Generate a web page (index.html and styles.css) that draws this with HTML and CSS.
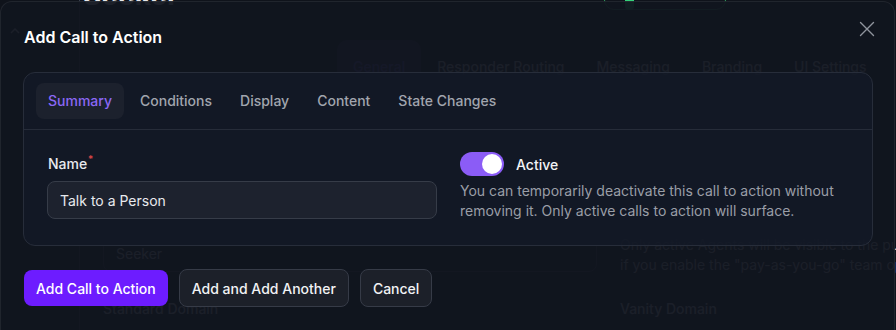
FILE: index.html
```html
<!DOCTYPE html>
<html lang="en">
<head>
<meta charset="utf-8">
<title>Add Call to Action</title>
<link rel="stylesheet" href="styles.css">
</head>
<body>
  <div class="bg">
    <aside class="bg-side">
      <svg class="bg-chev" width="10" height="6" viewBox="0 0 10 6" fill="none" stroke="currentColor" stroke-width="1.5"><path d="M1 5l4-4 4 4"/></svg>
    </aside>
    <main class="bg-main">
      <div class="bg-head">
        <h1 class="bg-title">Seeker</h1>
        <span class="bg-pill"><span class="bg-dot"></span></span>
      </div>
      <nav class="bg-tabs">
        <span class="bg-tab bg-tab-on">General</span>
        <span class="bg-tab">Responder Routing</span>
        <span class="bg-tab">Messaging</span>
        <span class="bg-tab">Branding</span>
        <span class="bg-tab">UI Settings</span>
      </nav>
      <div class="bg-form">
        <div class="bg-input">Seeker</div>
        <p class="bg-help"><span>Only active Agents will be visible to the public directory,</span><span>if you enable the "pay-as-you-go" team option.</span></p>
        <div class="bg-label">Standard Domain<sup>*</sup></div>
        <div class="bg-label">Vanity Domain</div>
      </div>
    </main>
  </div>

  <div class="modal" role="dialog">
    <header class="modal-head">
      <h2 class="modal-title">Add Call to Action</h2>
      <button class="close" aria-label="Close">
        <svg width="16" height="16" viewBox="0 0 16 16" fill="none" stroke="currentColor" stroke-width="1.4" stroke-linecap="round"><path d="M1.5 1.5l13 13M14.5 1.5l-13 13"/></svg>
      </button>
    </header>

    <section class="card">
      <nav class="tabs">
        <span class="tab tab-active">Summary</span>
        <span class="tab">Conditions</span>
        <span class="tab">Display</span>
        <span class="tab">Content</span>
        <span class="tab">State Changes</span>
      </nav>
      <div class="card-body">
        <div class="field">
          <label class="label">Name<span class="req">*</span></label>
          <input class="input" type="text" value="Talk to a Person">
        </div>
        <div class="field">
          <div class="toggle-row">
            <span class="toggle"><span class="knob"></span></span>
            <span class="toggle-label">Active</span>
          </div>
          <p class="help">You can temporarily deactivate this call to action without removing it. Only active calls to action will surface.</p>
        </div>
      </div>
    </section>

    <div class="actions">
      <button class="btn btn-primary">Add Call to Action</button>
      <button class="btn btn-secondary">Add and Add Another</button>
      <button class="btn btn-secondary">Cancel</button>
    </div>
  </div>
</body>
</html>
```

FILE: styles.css
```css
* {
  box-sizing: border-box;
  margin: 0;
  padding: 0;
}

html, body {
  width: 896px;
  height: 330px;
  overflow: hidden;
}

body {
  position: relative;
  background: #0f131b;
  font-family: Inter, "Noto Sans", sans-serif;
  color: #e5e7eb;
}

/* ---------- background page ---------- */
.bg {
  display: flex;
  margin-top: -23px;
  height: 400px;
}

.bg-side {
  width: 80px;
  border-right: 1px solid #3a4150;
  padding: 51px 0 0 10px;
  color: #cfd3da;
}

.bg-chev {
  display: block;
}

.bg-main {
  flex: 1;
  padding-left: 3px;
  min-width: 0;
}

.bg-head {
  display: flex;
  align-items: flex-start;
  justify-content: space-between;
  height: 36px;
}

.bg-title {
  font-size: 28px;
  line-height: 36px;
  font-weight: 700;
  color: #e5e7eb;
}

.bg-pill {
  width: 122px;
  height: 33px;
  margin-right: 170px;
  border: 1px solid #2f9e5d;
  border-radius: 10px;
  padding: 18px 0 0 20px;
}

.bg-dot {
  display: block;
  width: 9px;
  height: 14px;
  border-radius: 4px;
  background: #34d37a;
}

.bg-tabs {
  display: flex;
  margin: 27px 0 0 254px;
}

.bg-tab {
  height: 54px;
  line-height: 54px;
  padding: 0 16px;
  font-size: 14px;
  font-weight: 500;
  color: #c9cdd4;
  white-space: nowrap;
  border-radius: 10px;
}

.bg-tab-on {
  color: #6b5bd6;
  background: #2a3350;
}

.bg-form {
  display: grid;
  grid-template-columns: 494px 494px;
  column-gap: 23px;
  row-gap: 24px;
  margin: 142px 0 0 20px;
}

.bg-input {
  height: 36px;
  line-height: 34px;
  padding: 0 12px;
  border: 1px solid #3a4252;
  border-radius: 8px;
  font-size: 14px;
  color: #d6dae0;
}

.bg-help {
  margin-top: -1px;
  font-size: 14px;
  line-height: 20px;
  color: #c9cdd4;
  white-space: nowrap;
}

.bg-help span {
  display: block;
}

.bg-label {
  font-size: 14px;
  line-height: 20px;
  font-weight: 500;
  color: #d6dae0;
}

.bg-label sup {
  line-height: 0;
  color: #d26060;
  font-size: 9px;
}

/* ---------- modal ---------- */
.modal {
  position: absolute;
  left: 0;
  top: 1px;
  width: 895px;
  height: 345px;
  padding: 23px 21px 0 22px;
  border: 1px solid rgba(255, 255, 255, 0.07);
  border-radius: 12px;
  background: rgba(17, 21, 31, 0.95);
}

.modal-head {
  display: flex;
  align-items: flex-start;
  justify-content: space-between;
  height: 24px;
}

.modal-title {
  font-size: 16px;
  line-height: 24px;
  font-weight: 600;
  color: #ffffff;
  padding-left: 1px;
}

.close {
  display: flex;
  margin: -4px -2px 0 0;
  padding: 0;
  border: 0;
  background: transparent;
  color: #8f949d;
}

.card {
  margin-top: 23px;
  border: 1px solid #272d3a;
  border-radius: 12px;
  background: rgba(19, 25, 39, 0.8);
}

.tabs {
  display: flex;
  gap: 4px;
  padding: 10px 12px;
  border-bottom: 1px solid #262c39;
}

.tab {
  height: 36px;
  line-height: 36px;
  padding: 0 12px;
  border-radius: 8px;
  font-size: 14px;
  font-weight: 500;
  color: #a1a5ae;
}

.tab-active {
  color: #8b68f5;
  background: #1c212d;
}

.card-body {
  display: grid;
  grid-template-columns: 1fr 1fr;
  column-gap: 23px;
  padding: 22px 24px 24px;
}

.field {
  display: flex;
  flex-direction: column;
  align-items: flex-start;
}

.label {
  position: relative;
  height: 24px;
  line-height: 24px;
  font-size: 14px;
  font-weight: 500;
  color: #e8eaee;
}

.req {
  position: absolute;
  top: -5px;
  right: -6px;
  font-size: 10px;
  color: #e04848;
}

.input {
  width: 390px;
  height: 38px;
  margin: 5px 0 0 -1px;
  padding: 0 12px;
  border: 1px solid #363c48;
  border-radius: 8px;
  background: #1d222e;
  font-family: inherit;
  font-size: 14px;
  color: #e8eaee;
  outline: none;
}

.toggle-row {
  display: flex;
  align-items: center;
  gap: 12px;
  height: 24px;
}

.toggle {
  display: flex;
  justify-content: flex-end;
  align-items: center;
  width: 44px;
  height: 24px;
  padding: 2px;
  border-radius: 12px;
  background: #8b5cf6;
}

.knob {
  width: 20px;
  height: 20px;
  border-radius: 50%;
  background: #ffffff;
}

.toggle-label {
  font-size: 14px;
  font-weight: 500;
  color: #f3f4f6;
}

.help {
  margin-top: 5px;
  font-size: 14px;
  line-height: 20px;
  color: #9a9ea7;
}

.actions {
  display: flex;
  align-items: center;
  gap: 11px;
  margin: 23px 0 0 1px;
}

.btn {
  padding: 0 12px;
  border-radius: 8px;
  font-family: inherit;
  font-size: 14px;
  font-weight: 500;
  white-space: nowrap;
}

.btn-primary {
  height: 36px;
  border: 0;
  background: #6d1cff;
  color: #ffffff;
}

.btn-secondary {
  height: 38px;
  border: 1px solid #363b47;
  background: #1c2029;
  color: #f1f2f4;
}
```
